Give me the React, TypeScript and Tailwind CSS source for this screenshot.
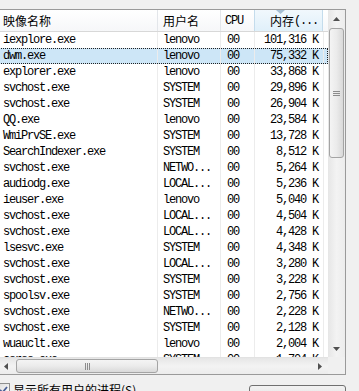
import React from 'react';

const rows = [
  ['iexplore.exe', 'lenovo', '00', '101,316 K'],
  ['dwm.exe', 'lenovo', '00', '75,332 K'],
  ['explorer.exe', 'lenovo', '00', '33,868 K'],
  ['svchost.exe', 'SYSTEM', '00', '29,896 K'],
  ['svchost.exe', 'SYSTEM', '00', '26,904 K'],
  ['QQ.exe', 'lenovo', '00', '23,584 K'],
  ['WmiPrvSE.exe', 'SYSTEM', '00', '13,728 K'],
  ['SearchIndexer.exe', 'SYSTEM', '00', '8,512 K'],
  ['svchost.exe', 'NETWO...', '00', '5,264 K'],
  ['audiodg.exe', 'LOCAL...', '00', '5,236 K'],
  ['ieuser.exe', 'lenovo', '00', '5,040 K'],
  ['svchost.exe', 'LOCAL...', '00', '4,504 K'],
  ['svchost.exe', 'LOCAL...', '00', '4,428 K'],
  ['lsesvc.exe', 'SYSTEM', '00', '4,348 K'],
  ['svchost.exe', 'LOCAL...', '00', '3,280 K'],
  ['svchost.exe', 'SYSTEM', '00', '3,228 K'],
  ['spoolsv.exe', 'SYSTEM', '00', '2,756 K'],
  ['svchost.exe', 'NETWO...', '00', '2,228 K'],
  ['svchost.exe', 'SYSTEM', '00', '2,128 K'],
  ['wuauclt.exe', 'lenovo', '00', '2,004 K'],
  ['csrss.exe', 'SYSTEM', '00', '1,704 K'],
];

const mono = "font-['Liberation_Mono',monospace] text-[12px] tracking-[-1.2px]";
const cjk = "font-['Noto_Sans_CJK_SC','Noto_Sans',sans-serif] text-[12px]";

function Arrow({ dir }: { dir: 'up' | 'down' | 'left' | 'right' }) {
  const pts = {
    up: '0,4 3.5,0 7,4',
    down: '0,0 7,0 3.5,4',
    left: '4,0 4,7 0,3.5',
    right: '0,0 0,7 4,3.5',
  }[dir];
  const vert = dir === 'up' || dir === 'down';
  return (
    <svg width={vert ? 7 : 4} height={vert ? 4 : 7} viewBox={vert ? '0 0 7 4' : '0 0 4 7'}>
      <polygon points={pts} fill="#505050" />
    </svg>
  );
}

function Row({ r, sel }: { r: string[]; sel: boolean }) {
  return (
    <div
      className={`flex h-[16px] w-[331px] shrink-0 items-center leading-[16px] text-black ${mono} ${
        sel ? 'bg-[#cde6f7] outline-1 outline-dotted outline-[#222] -outline-offset-1' : ''
      }`}
    >
      <div className="w-[161px] h-full border-r border-[#ececec] pl-[6px] whitespace-nowrap">{r[0]}</div>
      <div className="w-[63px] h-full border-r border-[#ececec] pl-[5px] whitespace-nowrap">{r[1]}</div>
      <div className="w-[34px] h-full border-r border-[#ececec] pl-[6px]">{r[2]}</div>
      <div className="w-[69px] h-full border-r border-[#ececec] pr-[5px] text-right whitespace-nowrap">{r[3]}</div>
    </div>
  );
}

export default function App() {
  return (
    <div className="w-[359px] h-[391px] overflow-hidden bg-[#f0f0f0] pt-[9px]">
      <div className="-ml-[3px] w-[349px] h-[366px] border-t border-r border-b border-[#9a9a9a] bg-white flex flex-col">
        <div className="flex h-[347px] shrink-0 overflow-hidden">
          <div className="w-[331px] h-full overflow-hidden">
            <div className="flex h-[22px] w-[331px] border-b border-[#d8d8d8] bg-gradient-to-b from-white to-[#f6f7f9] text-black">
              <div className={`w-[161px] border-r border-[#e3e6ea] pl-[6px] flex items-center ${cjk}`}>映像名称</div>
              <div className={`w-[63px] border-r border-[#e3e6ea] pl-[5px] flex items-center ${cjk}`}>用户名</div>
              <div className={`w-[34px] border-r border-[#e3e6ea] pl-[4px] flex items-center ${mono}`}>CPU</div>
              <div className="relative w-[69px] border-r border-l border-[#c4dcec] -ml-px bg-gradient-to-b from-[#f1f8fd] to-[#e0f0fa] pl-[15px] flex items-center">
                <svg className="absolute left-[21px] top-0" width="9" height="4" viewBox="0 0 9 4">
                  <polygon points="0,0 9,0 4.5,4" fill="#a6bfd3" />
                </svg>
                <span className={cjk}>内存</span>
                <span className={mono}>(...</span>
              </div>
            </div>
            {rows.map((r, i) => (
              <Row key={i} r={r} sel={i === 1} />
            ))}
          </div>
          <div className="w-[17px] h-full flex flex-col items-center bg-gradient-to-r from-[#e6e6e6] via-[#f3f3f3] to-[#ececec]">
            <div className="h-[17px] w-full flex items-center justify-center">
              <Arrow dir="up" />
            </div>
            <div className="mt-px h-[130px] w-[15px] rounded-[3px] border border-[#a4a4a4] bg-gradient-to-r from-[#f4f4f4] via-[#ebebeb] to-[#d9d9d9] flex flex-col items-center justify-center gap-[1px]">
              <div className="w-[7px] h-px bg-[#8c8c8c]" />
              <div className="w-[7px] h-px bg-[#8c8c8c]" />
              <div className="w-[7px] h-px bg-[#8c8c8c]" />
            </div>
            <div className="flex-1" />
            <div className="h-[17px] w-full flex items-center justify-center">
              <Arrow dir="down" />
            </div>
          </div>
        </div>
        <div className="flex h-[17px] shrink-0">
          <div className="w-[331px] h-full flex items-center border-t border-[#e2e2e2] bg-gradient-to-b from-[#e6e6e6] via-[#f3f3f3] to-[#ececec]">
            <div className="w-[17px] h-full flex items-center justify-center">
              <Arrow dir="left" />
            </div>
            <div className="ml-[2px] h-[14px] w-[142px] rounded-[3px] border border-[#a4a4a4] bg-gradient-to-b from-[#f4f4f4] via-[#ebebeb] to-[#d9d9d9] flex items-center justify-center gap-[1px]">
              <div className="w-px h-[7px] bg-[#8c8c8c]" />
              <div className="w-px h-[7px] bg-[#8c8c8c]" />
              <div className="w-px h-[7px] bg-[#8c8c8c]" />
            </div>
            <div className="flex-1" />
            <div className="w-[17px] h-full flex items-center justify-center">
              <Arrow dir="right" />
            </div>
          </div>
          <div className="w-[17px] h-full bg-[#f0f0f0]" />
        </div>
      </div>
      <div className="flex items-start">
        <div className="-ml-[3px] mt-[8px] flex items-start gap-[3px] whitespace-nowrap">
          <div className="w-[13px] h-[13px] border border-[#8e8f8f] bg-gradient-to-br from-[#dcdcdc] to-white flex items-center justify-center">
            <svg width="9" height="8" viewBox="0 0 9 8">
              <polyline points="1,4 3.5,6.5 8,1" fill="none" stroke="#4a5f97" strokeWidth="1.8" />
            </svg>
          </div>
          <span className={`${cjk} leading-[14px] text-black`}>显示所有用户的进程(S)</span>
        </div>
        <div
          className={`ml-auto mr-[13px] mt-[10px] w-[97px] h-[23px] shrink-0 rounded-[3px] border border-[#707070] bg-gradient-to-b from-[#f2f2f2] via-[#e6e6e6] to-[#d0d0d0] flex items-start justify-center pt-[2px] whitespace-nowrap ${cjk} text-black`}
        >
          结束进程(E)
        </div>
      </div>
    </div>
  );
}
